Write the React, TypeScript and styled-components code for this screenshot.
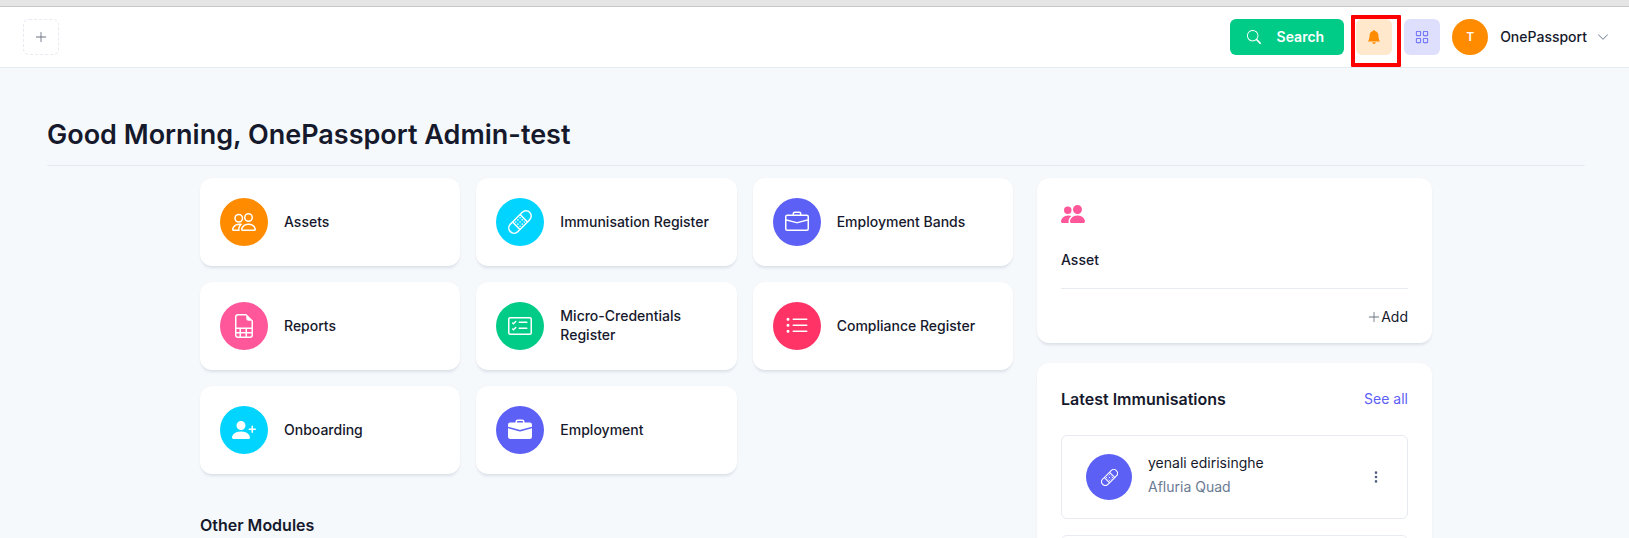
import React from "react";
import styled, { createGlobalStyle } from "styled-components";
import {
  BsBandaid,
  BsBellFill,
  BsBriefcase,
  BsBriefcaseFill,
  BsCardChecklist,
  BsChevronDown,
  BsFileEarmarkSpreadsheet,
  BsGrid,
  BsListUl,
  BsPeople,
  BsPeopleFill,
  BsPersonPlusFill,
  BsPlusLg,
  BsSearch,
  BsThreeDotsVertical,
} from "react-icons/bs";

const color = {
  ink: "#16192c",
  muted: "#6b7b93",
  glyph: "#6b7280",
  line: "#e7eaf0",
  page: "#f5f9fc",
  orange: "#ff8c00",
  cyan: "#00d4ff",
  purple: "#5c60f5",
  pink: "#ff579a",
  green: "#00cc88",
  red: "#ff3366",
};

const GlobalStyle = createGlobalStyle`
  *, *::before, *::after { box-sizing: border-box; }
  body {
    margin: 0;
    background: ${color.page};
    color: ${color.ink};
    font-family: Inter, "Liberation Sans", sans-serif;
    font-size: 14px;
    line-height: 20px;
  }
  h1, h2, h3, p, ul { margin: 0; padding: 0; }
  ul { list-style: none; }
  button { font: inherit; color: inherit; border: 0; padding: 0; background: none; cursor: pointer; }
  a { color: inherit; text-decoration: none; }
  svg { display: block; flex: none; }
`;

const WindowEdge = styled.div`
  height: 7px;
  background: #e5e5e5;
  border-bottom: 1px solid #c6c6c6;
`;

const TopBar = styled.header`
  display: flex;
  align-items: center;
  justify-content: space-between;
  height: 61px;
  padding: 0 20px 0 23px;
  background: #fff;
  border-bottom: 1px solid #e3eaf0;
`;

const Actions = styled.div`
  display: flex;
  align-items: center;
  gap: 12px;
`;

const SquareButton = styled.button<{ $bg?: string; $fg?: string; $dashed?: boolean }>`
  display: flex;
  align-items: center;
  justify-content: center;
  width: 36px;
  height: 36px;
  border-radius: 6px;
  background: ${(p) => p.$bg ?? "transparent"};
  color: ${(p) => p.$fg ?? color.glyph};
  border: ${(p) => (p.$dashed ? `1px dashed ${color.line}` : "0")};
`;

const SearchButton = styled.button`
  display: flex;
  align-items: center;
  gap: 16px;
  height: 36px;
  padding: 0 20px 0 17px;
  border-radius: 6px;
  background: ${color.green};
  color: #fff;
  font-weight: 600;
`;

const Highlighted = styled.div`
  position: relative;

  &::after {
    content: "";
    position: absolute;
    inset: -4px -9px -12px -5px;
    border: 4px solid #ff0000;
    border-radius: 1px;
    pointer-events: none;
  }
`;

const UserMenu = styled.button`
  display: flex;
  align-items: center;
  font-weight: 500;
`;

const Initial = styled.span`
  display: flex;
  align-items: center;
  justify-content: center;
  width: 36px;
  height: 36px;
  margin-right: 12px;
  border-radius: 50%;
  background: ${color.orange};
  color: #fff;
  font-size: 12px;
  font-weight: 600;
`;

const UserName = styled.span`
  margin-right: 10px;
`;

const Page = styled.main`
  padding: 48px 44px 0 47px;
`;

const Greeting = styled.h1`
  padding-bottom: 12px;
  border-bottom: 1px solid ${color.line};
  font-size: 27px;
  line-height: 37px;
  font-weight: 600;
`;

const Container = styled.div`
  display: grid;
  grid-template-columns: minmax(0, 1fr) 395px;
  align-items: start;
  gap: 24px;
  max-width: 1232px;
  margin: 12px auto 0;
`;

const Modules = styled.ul`
  display: grid;
  grid-template-columns: repeat(3, minmax(0, 1fr));
  gap: 16px;
`;

const Surface = styled.div`
  background: #fff;
  border-radius: 12px;
  box-shadow: 0 0 1px rgba(10, 22, 70, 0.06), 0 3px 3px -1px rgba(10, 22, 70, 0.1);
`;

const ModuleCard = styled(Surface)`
  display: flex;
  align-items: center;
  gap: 16px;
  height: 88px;
  padding: 0 20px;
  line-height: 19px;
  font-weight: 500;
`;

const ModuleName = styled.span`
  padding-bottom: 2px;
`;

const RoundIcon = styled.span<{ $bg: string; $size: number }>`
  display: flex;
  flex: none;
  align-items: center;
  justify-content: center;
  width: ${(p) => p.$size}px;
  height: ${(p) => p.$size}px;
  border-radius: 50%;
  background: ${(p) => p.$bg};
  color: #fff;
`;

const SectionTitle = styled.h2`
  font-size: 16px;
  line-height: 24px;
  font-weight: 600;
`;

const OtherModules = styled.section`
  padding-top: 39px;
`;

const Side = styled.aside`
  display: grid;
  gap: 20px;
`;

const Panel = styled(Surface)`
  padding: 24px;
`;

const AssetPanel = styled(Panel)`
  padding-bottom: 16px;
`;

const AssetHead = styled.div`
  display: grid;
  gap: 24px;
  padding-bottom: 18px;
  border-bottom: 1px solid ${color.line};
  color: ${color.pink};
`;

const AssetTitle = styled.h3`
  color: ${color.ink};
  font-size: 14px;
  line-height: 20px;
  font-weight: 500;
`;

const AddRow = styled.div`
  display: flex;
  justify-content: flex-end;
  padding-top: 18px;

  svg {
    color: ${color.glyph};
  }
`;

const AddLink = styled.a`
  display: flex;
  align-items: center;
`;

const PanelHead = styled.div`
  display: flex;
  align-items: center;
  justify-content: space-between;
  margin-bottom: 24px;
`;

const SeeAll = styled.a`
  color: ${color.purple};
`;

const Records = styled.ul`
  display: grid;
  gap: 16px;
`;

const Record = styled.li`
  display: flex;
  align-items: center;
  gap: 16px;
  height: 84px;
  padding: 0 24px;
  border: 1px solid ${color.line};
  border-radius: 6px;
`;

const RecordText = styled.div`
  flex: 1;
  line-height: 24px;
  padding-bottom: 4px;
`;

const RecordNote = styled.p`
  color: ${color.muted};
`;

const MoreButton = styled.button`
  color: #525f7f;
`;

const modules = [
  { name: "Assets", icon: BsPeople, bg: color.orange },
  { name: "Immunisation Register", icon: BsBandaid, bg: color.cyan },
  { name: "Employment Bands", icon: BsBriefcase, bg: color.purple },
  { name: "Reports", icon: BsFileEarmarkSpreadsheet, bg: color.pink },
  { name: "Micro-Credentials Register", icon: BsCardChecklist, bg: color.green },
  { name: "Compliance Register", icon: BsListUl, bg: color.red },
  { name: "Onboarding", icon: BsPersonPlusFill, bg: color.cyan },
  { name: "Employment", icon: BsBriefcaseFill, bg: color.purple },
];

const records = [
  { name: "yenali edirisinghe", vaccine: "Afluria Quad" },
  { name: "yenali edirisinghe", vaccine: "Afluria Quad" },
];

export default function App() {
  return (
    <>
      <GlobalStyle />
      <WindowEdge />
      <TopBar>
        <SquareButton $dashed aria-label="Create">
          <BsPlusLg size={14} />
        </SquareButton>
        <Actions>
          <SearchButton>
            <BsSearch size={14} />
            Search
          </SearchButton>
          <Highlighted>
            <SquareButton $bg="#ffe8cc" $fg={color.orange} aria-label="Notifications">
              <BsBellFill size={14} />
            </SquareButton>
          </Highlighted>
          <SquareButton $bg="#dedffd" $fg={color.purple} aria-label="Apps">
            <BsGrid size={14} />
          </SquareButton>
          <UserMenu>
            <Initial>T</Initial>
            <UserName>OnePassport</UserName>
            <BsChevronDown size={12} color={color.muted} />
          </UserMenu>
        </Actions>
      </TopBar>
      <Page>
        <Greeting>Good Morning, OnePassport Admin-test</Greeting>
        <Container>
          <div>
            <Modules>
              {modules.map(({ name, icon: Icon, bg }) => (
                <li key={name}>
                  <ModuleCard as="a" href="#">
                    <RoundIcon $bg={bg} $size={48}>
                      <Icon size={24} />
                    </RoundIcon>
                    <ModuleName>{name}</ModuleName>
                  </ModuleCard>
                </li>
              ))}
            </Modules>
            <OtherModules>
              <SectionTitle>Other Modules</SectionTitle>
            </OtherModules>
          </div>
          <Side>
            <AssetPanel>
              <AssetHead>
                <BsPeopleFill size={24} />
                <AssetTitle>Asset</AssetTitle>
              </AssetHead>
              <AddRow>
                <AddLink href="#">
                  <BsPlusLg size={14} />
                  Add
                </AddLink>
              </AddRow>
            </AssetPanel>
            <Panel>
              <PanelHead>
                <SectionTitle>Latest Immunisations</SectionTitle>
                <SeeAll href="#">See all</SeeAll>
              </PanelHead>
              <Records>
                {records.map((r, i) => (
                  <Record key={i}>
                    <RoundIcon $bg={color.purple} $size={46}>
                      <BsBandaid size={17} />
                    </RoundIcon>
                    <RecordText>
                      <p>{r.name}</p>
                      <RecordNote>{r.vaccine}</RecordNote>
                    </RecordText>
                    <MoreButton aria-label="More options">
                      <BsThreeDotsVertical size={14} />
                    </MoreButton>
                  </Record>
                ))}
              </Records>
            </Panel>
          </Side>
        </Container>
      </Page>
    </>
  );
}
